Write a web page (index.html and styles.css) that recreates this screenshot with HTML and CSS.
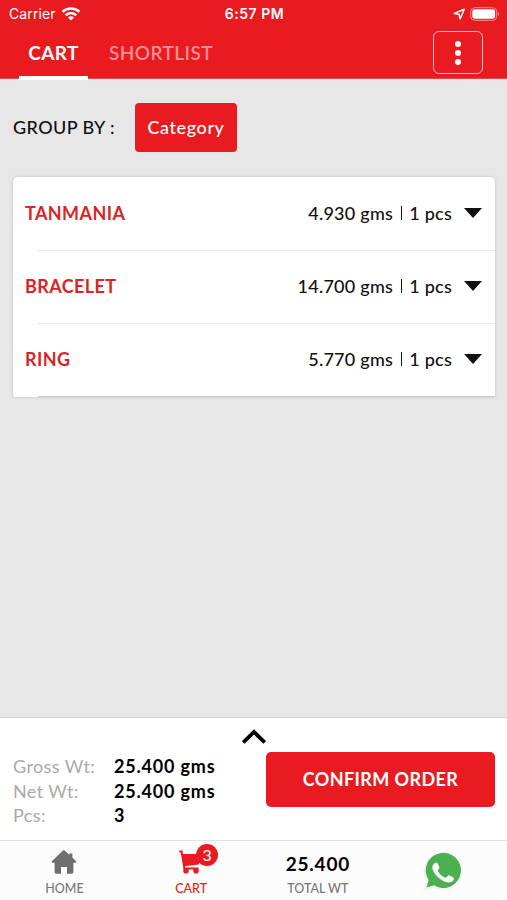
FILE: index.html
```html
<!DOCTYPE html>
<html lang="en">
<head>
	<meta charset="UTF-8">
	<meta name="viewport" content="width=device-width, initial-scale=1.0">
	<title>Cart</title>
	<link rel="stylesheet" href="styles.css">
</head>
<body>
	<header>
		<div class="status">
			<div class="carrier">
				<span>Carrier</span>
				<svg width="20" height="14" viewBox="0 0 20 14" fill="none" stroke="#fff" stroke-width="2.5">
					<path d="M1.5 4.8C6.3.4 13.7.4 18.5 4.8"/>
					<path d="M4.7 8.3C7.8 5.5 12.2 5.5 15.3 8.3"/>
					<path d="M10 13.6L6.9 10.4Q10 8 13.1 10.4Z" fill="#fff" stroke="none"/>
				</svg>
			</div>
			<div class="time">6:57 PM</div>
			<div class="power">
				<svg width="13" height="12" viewBox="0 0 13 12" fill="none" stroke="#fff" stroke-width="1.5" stroke-linejoin="round">
					<path d="M11.3 1.2L1.3 5.4L6 6.2L7.2 10.8Z"/>
				</svg>
				<svg width="30" height="14" viewBox="0 0 30 14">
					<rect x=".7" y=".7" width="26" height="12.6" rx="4" fill="none" stroke="#f79496"/>
					<rect x="2.3" y="2.3" width="22.8" height="9.4" rx="2.4" fill="#fff"/>
					<path d="M28 4.8Q30 7 28 9.2Z" fill="#f79496"/>
				</svg>
			</div>
		</div>
		<div class="bar">
			<a href="#" class="tab active">CART</a>
			<a href="#" class="tab">SHORTLIST</a>
			<a href="#" class="more"><i></i><i></i><i></i></a>
		</div>
	</header>

	<main>
		<div class="group">
			<span class="label">GROUP BY :</span>
			<a href="#" class="category">Category</a>
		</div>
		<ul class="list">
			<li>
				<span class="name">TANMANIA</span>
				<span class="weight">4.930 gms <i></i> 1 pcs</span>
				<svg class="arrow" width="18" height="10" viewBox="0 0 18 10"><path d="M0 0H18L9 10Z" fill="#111"/></svg>
			</li>
			<li>
				<span class="name">BRACELET</span>
				<span class="weight">14.700 gms <i></i> 1 pcs</span>
				<svg class="arrow" width="18" height="10" viewBox="0 0 18 10"><path d="M0 0H18L9 10Z" fill="#111"/></svg>
			</li>
			<li>
				<span class="name">RING</span>
				<span class="weight">5.770 gms <i></i> 1 pcs</span>
				<svg class="arrow" width="18" height="10" viewBox="0 0 18 10"><path d="M0 0H18L9 10Z" fill="#111"/></svg>
			</li>
		</ul>
	</main>

	<section class="summary">
		<svg class="expand" width="24" height="15" viewBox="0 0 24 15" fill="none" stroke="#000" stroke-width="3.8">
			<path d="M1.3 13.5L12 3L22.7 13.5"/>
		</svg>
		<div class="order">
			<dl>
				<dt>Gross Wt:</dt><dd>25.400 gms</dd>
				<dt>Net Wt:</dt><dd>25.400 gms</dd>
				<dt>Pcs:</dt><dd>3</dd>
			</dl>
			<a href="#" class="confirm">CONFIRM ORDER</a>
		</div>
	</section>

	<nav>
		<a href="#" class="item">
			<svg width="26" height="24" viewBox="0 0 26 24" fill="#6f6f6f">
				<path d="M13 0L18.4 4.7V3.4H21.4V7.4L25.2 11.2Q25.6 12.8 24 12.8H22.4V22Q22.4 23.8 20.6 23.8H16V17H10V23.8H5.4Q3.6 23.8 3.6 22V12.8H2Q.4 12.8.8 11.2L12 .6Q12.5 0 13 0Z"/>
			</svg>
			<span class="text">HOME</span>
		</a>
		<a href="#" class="item current">
			<span class="cart">
				<svg width="24" height="24" viewBox="0 0 24 24">
					<path d="M2.8 4H22L19.8 14.6L4.8 16.2Z" fill="#e91b20"/>
					<path d="M.3 1.6H2.6L5.4 18.4H19.5" fill="none" stroke="#e91b20" stroke-width="2"/>
					<circle cx="7" cy="20.8" r="2.8" fill="#e91b20"/>
					<circle cx="17" cy="20.8" r="2.8" fill="#e91b20"/>
				</svg>
				<b class="badge">3</b>
			</span>
			<span class="text">CART</span>
		</a>
		<div class="item">
			<strong>25.400</strong>
			<span class="text">TOTAL WT</span>
		</div>
		<a href="#" class="item chat">
			<svg width="42" height="42" viewBox="0 0 42 42">
				<path d="M2 40L5 30A18.5 18.5 0 1 1 12.5 37Z" fill="#f0f1f3"/>
				<path d="M5.5 36.5L7.6 29A17.6 17.6 0 1 1 13 34.3Z" fill="#4caf50"/>
				<path d="M12.3 13.8C14 11.2 16.3 11.2 17.2 13.4L18.4 16.3C18.8 17.8 16.3 19 16.8 20.1C18.5 23.4 21.2 25.8 24.4 26.7C25.7 26.8 26.8 23.9 28.3 24.3L32.2 26.4C33.8 27.3 32.5 30 30.3 31C27.8 32.1 24.6 31.1 21.1 29.2C16.8 26.8 13.2 22.6 11.7 18.8C11 16.9 11.3 15.2 12.3 13.8Z" fill="#fff"/>
			</svg>
		</a>
	</nav>
</body>
</html>
```
FILE: styles.css
```css
* {
	margin: 0;
	padding: 0;
	box-sizing: border-box;
	list-style: none;
	text-decoration: none;
}
body {
	display: flex;
	flex-direction: column;
	height: 900px;
	background-color: #e7e7e7;
	font-family: Lato, "Liberation Sans", sans-serif;
	font-size: 18px;
	font-weight: 500;
	letter-spacing: .4px;
	color: #111;
	white-space: nowrap;
}
svg {
	display: block;
	flex: none;
}
header {
	height: 79px;
	background-color: #e91b20;
	border-bottom: 1px solid #e0474b;
	color: #fff;
}
.status {
	display: grid;
	grid-template-columns: 1fr auto 1fr;
	align-items: center;
	height: 27px;
	padding: 0 7px 0 9px;
	font-family: Inter, sans-serif;
	font-size: 14px;
}
.carrier {
	display: flex;
	align-items: center;
	gap: 5px;
	font-weight: 400;
	letter-spacing: .1px;
}
.time {
	font-weight: 600;
	letter-spacing: .5px;
}
.power {
	display: flex;
	justify-content: flex-end;
	align-items: center;
	gap: 4px;
}
.bar {
	display: flex;
	height: 53px;
	padding: 0 24px 0 19px;
}
.tab {
	display: flex;
	justify-content: center;
	width: 69px;
	height: 53px;
	line-height: 51px;
	font-size: 19px;
	font-weight: 700;
	color: #f79193;
}
.tab + .tab {
	width: 104px;
	margin-left: 21px;
	font-weight: 600;
}
.tab.active {
	border-bottom: 4px solid #fff;
	color: #fff;
}
.more {
	display: flex;
	flex-direction: column;
	justify-content: center;
	align-items: center;
	gap: 3px;
	width: 50px;
	height: 43px;
	margin: 4px 0 0 auto;
	border: 1.5px solid #fbc3c4;
	border-radius: 6px;
}
.more i {
	width: 6px;
	height: 6px;
	border-radius: 50%;
	background-color: #fff;
}
main {
	flex: 1;
	padding: 24px 12px 0 13px;
}
.group {
	display: flex;
	align-items: center;
	height: 49px;
}
.label {
	width: 122px;
	line-height: 46px;
	padding-bottom: 2px;
}
.category {
	width: 102px;
	border-radius: 4px;
	background-color: #e91b20;
	line-height: 49px;
	text-align: center;
	letter-spacing: .6px;
	color: #fff;
}
.list {
	margin-top: 25px;
	border-radius: 5px 5px 2px 2px;
	background-color: #fff;
	box-shadow: 0 0 2px 1px #d2d2d2;
}
.list li {
	display: flex;
	align-items: center;
	height: 73px;
	padding: 0 13px 3px 12px;
	background: linear-gradient(#ebebeb, #ebebeb) 25px 100% / 100% 1px no-repeat;
}
.list li:first-child {
	height: 74px;
	padding-bottom: 2px;
}
.list li:last-child {
	background-image: linear-gradient(#c8c8c8, #c8c8c8);
}
.name {
	font-weight: 700;
	color: #dc2428;
}
.weight {
	margin-left: auto;
	letter-spacing: .25px;
}
.weight i {
	display: inline-block;
	width: 1.5px;
	height: 14px;
	margin: 0 2px 0 3px;
	background-color: #111;
}
.arrow {
	margin-left: 12px;
}
.summary {
	height: 123px;
	padding: 11px 12px 0 13px;
	border-top: 1px solid #d3d3d3;
	background-color: #fff;
}
.expand {
	margin: 0 auto;
}
.order {
	display: flex;
	justify-content: space-between;
	margin-top: 8px;
}
dl {
	display: grid;
	grid-template-columns: 101px auto;
	padding-top: 2px;
	line-height: 24.5px;
}
dt {
	font-weight: 400;
	color: #aaa;
}
dd {
	font-weight: 700;
	letter-spacing: .8px;
	color: #000;
}
.confirm {
	width: 229px;
	height: 55px;
	border-radius: 5px;
	background-color: #e91b20;
	line-height: 54px;
	text-align: center;
	font-weight: 700;
	color: #fff;
}
nav {
	display: grid;
	grid-template-columns: repeat(4, 1fr);
	height: 60px;
	border-top: 1px solid #e3e3e3;
	background-color: #fcfcfc;
}
.item {
	display: flex;
	flex-direction: column;
	align-items: center;
	padding: 9px 0 0 2px;
	color: #777;
}
.text {
	margin-top: 7px;
	font-size: 12.5px;
	line-height: 16px;
	letter-spacing: 0;
}
.current {
	color: #e91b20;
}
.cart {
	position: relative;
}
.badge {
	position: absolute;
	left: 17px;
	top: -6px;
	width: 22px;
	height: 22px;
	border-radius: 50%;
	background-color: #e91b20;
	line-height: 22px;
	text-align: center;
	font-size: 16px;
	font-weight: 400;
	letter-spacing: 0;
	color: #fff;
}
.item strong {
	height: 24px;
	line-height: 28px;
	font-size: 19px;
	letter-spacing: .8px;
	color: #000;
}
.chat {
	padding: 10px 3px 0 0;
}
```
